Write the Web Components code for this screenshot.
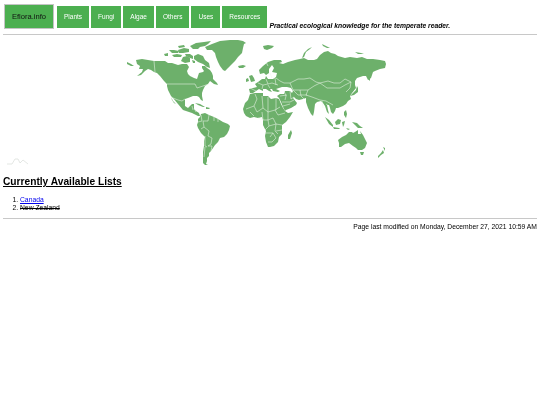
<!DOCTYPE html>
<html lang="en"><head><meta charset="utf-8"><title>Eflora.info</title>
<style>
html,body{margin:0;background:#fff}
body{padding:0 3px;font-family:"Liberation Sans",Arial,sans-serif;color:#000;filter:blur(.3px);height:405px;box-sizing:border-box}
</style></head><body>
<site-header>
<nav-btn main>Eflora.info</nav-btn><nav-btn>Plants</nav-btn><nav-btn>Fungi</nav-btn><nav-btn>Algae</nav-btn><nav-btn>Others</nav-btn><nav-btn>Uses</nav-btn><nav-btn>Resources</nav-btn>
<span slot="tag">Practical ecological knowledge for the temperate reader.</span>
</site-header>
<world-map></world-map>
<list-section heading="Currently Available Lists">
<li><a href="#">Canada</a></li>
<li><s>New Zealand</s></li>
</list-section>
<site-footer>Page last modified on Monday, December 27, 2021 10:59 AM</site-footer>
<script>
function def(name,html,init){customElements.define(name,class extends HTMLElement{constructor(){super();this.attachShadow({mode:'open'}).innerHTML=html;}connectedCallback(){if(init)init(this);}});}
def('nav-btn',`<style>
:host{display:block;box-sizing:border-box;height:22px;margin-top:6px;padding:0 7px;background:#4caf50;color:#fff;font-size:6.5px;line-height:22px;white-space:nowrap}
:host([main]){height:25px;margin-top:4px;margin-left:1px;margin-right:1px;padding:0;width:50px;color:#111;font-size:7.6px;line-height:23px;border:1px solid #c4c4c4;text-align:center}
</style><slot></slot>`);
def('site-header',`<style>
:host{display:block;height:34px;border-bottom:1px solid #c8c8c8}
.r{display:flex;align-items:flex-start;gap:2px;height:34px}
.t{font:italic bold 6.75px "Liberation Sans",Arial,sans-serif;margin:21px 0 0 0;line-height:9px;white-space:nowrap}
</style><div class="r"><slot></slot><div class="t"><slot name="tag"></slot></div></div>`);
def('world-map',`<style>
:host{display:block;height:135px}
svg{display:block}
.l{fill:#6db06b}
.b{fill:none;stroke:#eef6ec;stroke-width:.55;stroke-linejoin:round}
</style>
<svg width="534" height="135" viewBox="3 35 534 135" xmlns="http://www.w3.org/2000/svg">
<g class="l">
<path d="M136 60 142 59 148 60 154 61 160 61 165 61 168 63 172 63 178 65 182 64 187 64 189 67 187 71 188 74 190 76 194 78 197 79 198 76 199 73 203 72 204 71 202 68 202 66 205 66 207 68 210 70 212 73 213 76 213 79 217 83 218 85 214 84 210 81 208 84 205 86 203 90 202 93 202 96 203 101 201 100 199 97 197 96 193 96 188 98 185 99 185 106 188 108 192 104 194 104 194 109 196 111 199 113 200 116 198 116 192 113 183 110 178 104 173 98 171 96 170 94 168 90 167 86 167 84 164 81 160 76 157 73 154 72 151 70 148 69 145 71 141 75 137 76 142 72 143 69 139 69 140 66 137 64 Z"/>
<path d="M127 62 131 64 134 66 131 66 127 64Z"/>
<path d="M171 97 173 101 176 104 174 103 172 100Z"/>
<path d="M195 103 200 104 205 107 203 107 198 105Z"/><path d="M206 107 210 108 209 109 206 109Z"/>
<path d="M190 46 196 43 204 42 211 41 208 44 205 46 200 47 198 49 193 49Z"/>
<path d="M194 56 198 54 203 56 205 60 209 63 210 68 207 67 203 64 198 62 194 59Z"/>
<path d="M169 50 174 50 179 51 178 53 172 53Z"/><path d="M178 50 184 48 189 49 189 52 183 53 179 53Z"/>
<path d="M172 55 177 54 182 55 181 57 174 57Z"/><path d="M183 57 187 56 190 58 190 62 185 63 181 61Z"/>
<path d="M185 54 190 54 193 56 193 59 190 58 186 56Z"/><path d="M164 54 168 53 168 56 165 56Z"/><path d="M178 46 184 45 185 47 179 48Z"/><path d="M192 60 195 61 195 63 193 63Z"/>
<path d="M205 47 212 44 220 41 230 40 238 40 243 41 246 43 244 44 243 48 242 53 238 57 235 61 231 65 228 68 225 71 223 70 220 66 218 62 216 57 215 53 212 50 207 50Z"/>
<path d="M238 66 243 65 246 66 243 68 239 68Z"/>
<path d="M201 114 205 113 209 115 214 117 218 119 223 122 228 124 230 126 229 130 227 134 224 137 220 138 218 142 215 145 213 148 211 151 209 153 209 156 207 158 207 161 206 164 208 165 205 165 203 163 203 158 203 152 204 146 204 141 205 137 201 133 198 128 197 125 198 122 198 119 200 117Z"/>
<path d="M250 93 249 89 253 88 257 87 255 84 258 82 262 79 265 79 266 76 268 79 273 79 276 77 277 73 272 72 274 68 272 65 269 69 269 73 266 75 264 73 260 74 259 70 263 66 268 62 274 60 281 60 282 62 279 63 283 64 288 62 295 60 300 59 304 58 308 60 314 60 317 59 320 55 324 52 328 51 331 53 335 54 338 56 345 58 350 57 357 58 362 57 367 59 373 59 380 60 385 61 386 64 385 68 380 69 375 71 373 72 371 78 368 80 366 76 363 76 357 78 355 81 355 85 356 88 352 93 350 96 351 99 348 101 346 104 343 106 338 108 336 108 335 111 333 114 331 112 330 108 329 105 327 105 328 110 329 114 327 112 325 106 323 103 321 101 317 102 315 104 314 112 313 116 311 114 308 108 306 102 306 98 303 99 299 100 296 99 294 97 293 98 297 103 296 105 291 108 286 110 285 111 283 107 281 102 279 98 277 96 280 94 282 94 284 94 285 91 290 91 292 93 293 91 291 88 287 87 282 87 276 89 280 91 278 92 273 91 272 89 270 89 272 92 269 91 266 89 263 89 263 91 261 90 259 89 256 91 253 93Z"/>
<path d="M249 76 252 75 254 78 255 81 251 82 250 79Z"/><path d="M246 79 248 78 249 81 246 82Z"/>
<path d="M368 79 369 74 370 76 370 81Z"/>
<path d="M350 96 352 94 356 90 357 86 358 88 358 92 354 95Z"/>
<path d="M263 46 268 45 274 46 272 48 267 50 264 49Z"/><path d="M302 58 304 53 308 49 312 47 310 49 306 52 304 57Z"/><path d="M322 44 326 46 330 48 327 48 323 46Z"/><path d="M355 52 361 53 364 54 358 54Z"/>
<path d="M250 94 255 93 260 93 263 93 263 96 268 96 271 99 276 98 279 99 281 104 283 108 285 111 288 113 293 112 290 117 286 122 282 125 282 130 282 134 279 137 278 142 274 146 270 147 268 147 266 142 265 136 266 131 263 125 263 120 262 117 258 118 254 117 250 118 246 116 244 113 243 109 245 103 248 100Z"/>
<path d="M291 130 292 133 290 139 288 139 288 135Z"/>
<path d="M325 117 329 120 333 125 333 127 329 124Z"/><path d="M333 127 339 128 340 129 334 129Z"/>
<path d="M335 122 338 119 341 120 340 124 336 125Z"/><path d="M342 122 345 121 344 125 343 127Z"/><path d="M344 112 346 110 347 114 346 118 344 115Z"/>
<path d="M352 122 357 123 360 126 363 128 358 128 355 125Z"/><path d="M346 128 350 129 348 130Z"/>
<path d="M338 140 342 137 346 135 349 132 352 132 353 133 355 132 358 130 358 134 361 134 360 131 363 135 365 139 367 143 365 148 362 150 358 150 356 148 353 146 349 143 345 144 341 147 339 147 339 143Z"/>
<path d="M360 152 364 152 363 155 361 155Z"/>
<path d="M378 156 381 153 383 150 384 153 381 155 378 158Z"/><path d="M383 147 384 149 385 151 385 148Z"/>
</g>
<g class="b">
<path d="M154 61 155 72"/>
<path d="M167 84 195 84 197 88 200 87 209 84"/>
<path d="M173 98 178 100 182 101 185 99"/>
<path d="M193 110 192 106M196 112 194 108"/>
<path d="M201 115 202 121 198 122M209 115 208 121 203 121 204 127 201 129M204 127 209 131 208 136 212 138 211 144 208 146M205 136 205 146 207 147M205 147 204 157M208 146 212 146 211 151M214 117 214 121M218 119 218 122"/>
<path d="M250 88 256 91M258 83 263 85 262 89M266 79 268 84 272 83 278 85M263 85 268 84M270 73 272 78M276 78 280 81 284 83M266 62 268 66M268 85 270 88M275 78 276 85"/>
<path d="M284 83 290 83 298 79 304 79 310 78 316 82 320 83 328 81 334 83 340 83 345 79 351 82 350 88 346 92"/>
<path d="M320 83 327 88 340 88 345 85 351 82"/>
<path d="M290 83 293 90 300 90 308 90 314 86 320 83"/>
<path d="M308 90 306 95 312 97 320 100 326 101 333 105"/>
<path d="M293 90 298 95 307 95M300 90 301 96 304 99M290 91 291 99 294 97M287 95 280 96M282 102 290 102 294 100M322 101 323 108M326 104 329 106"/>
<path d="M284 91 286 96 285 100M283 106 290 104"/>
<path d="M246 109 254 106 257 112 263 108 268 112 275 110 280 107M254 106 257 99 255 94M263 108 262 96M268 112 268 97M276 98 276 110M275 110 278 115 285 113M262 112 263 120 258 118M268 112 268 120 273 118 276 124 282 125M263 120 268 120 269 126 265 130M269 126 276 124 275 131 278 134M265 133 273 133 276 138 272 142 268 142M276 131 282 130M250 112 254 116M273 133 270 137"/>
</g>
<path d="M7 164 12 164 15 159 18 159 20 163 23 160 28 164" fill="none" stroke="#d2d6d2" stroke-width=".6"/>
</svg>`);
def('list-section',`<style>
:host{display:block}
h2{margin:5px 0 0;font-size:10.2px;line-height:14px;font-weight:bold;text-decoration:underline}
ol{margin:7px 0 0;padding:0 0 0 17px;font-size:6.75px;line-height:8px}
</style><h2></h2><ol><slot></slot></ol>`,el=>{el.shadowRoot.querySelector('h2').textContent=el.getAttribute('heading');});
def('site-footer',`<style>
:host{display:block;margin-top:6px;border-top:1px solid #c8c8c8;padding-top:3px;text-align:right;font-size:6.75px;line-height:9px}
</style><slot></slot>`);
</script>
</body></html>
